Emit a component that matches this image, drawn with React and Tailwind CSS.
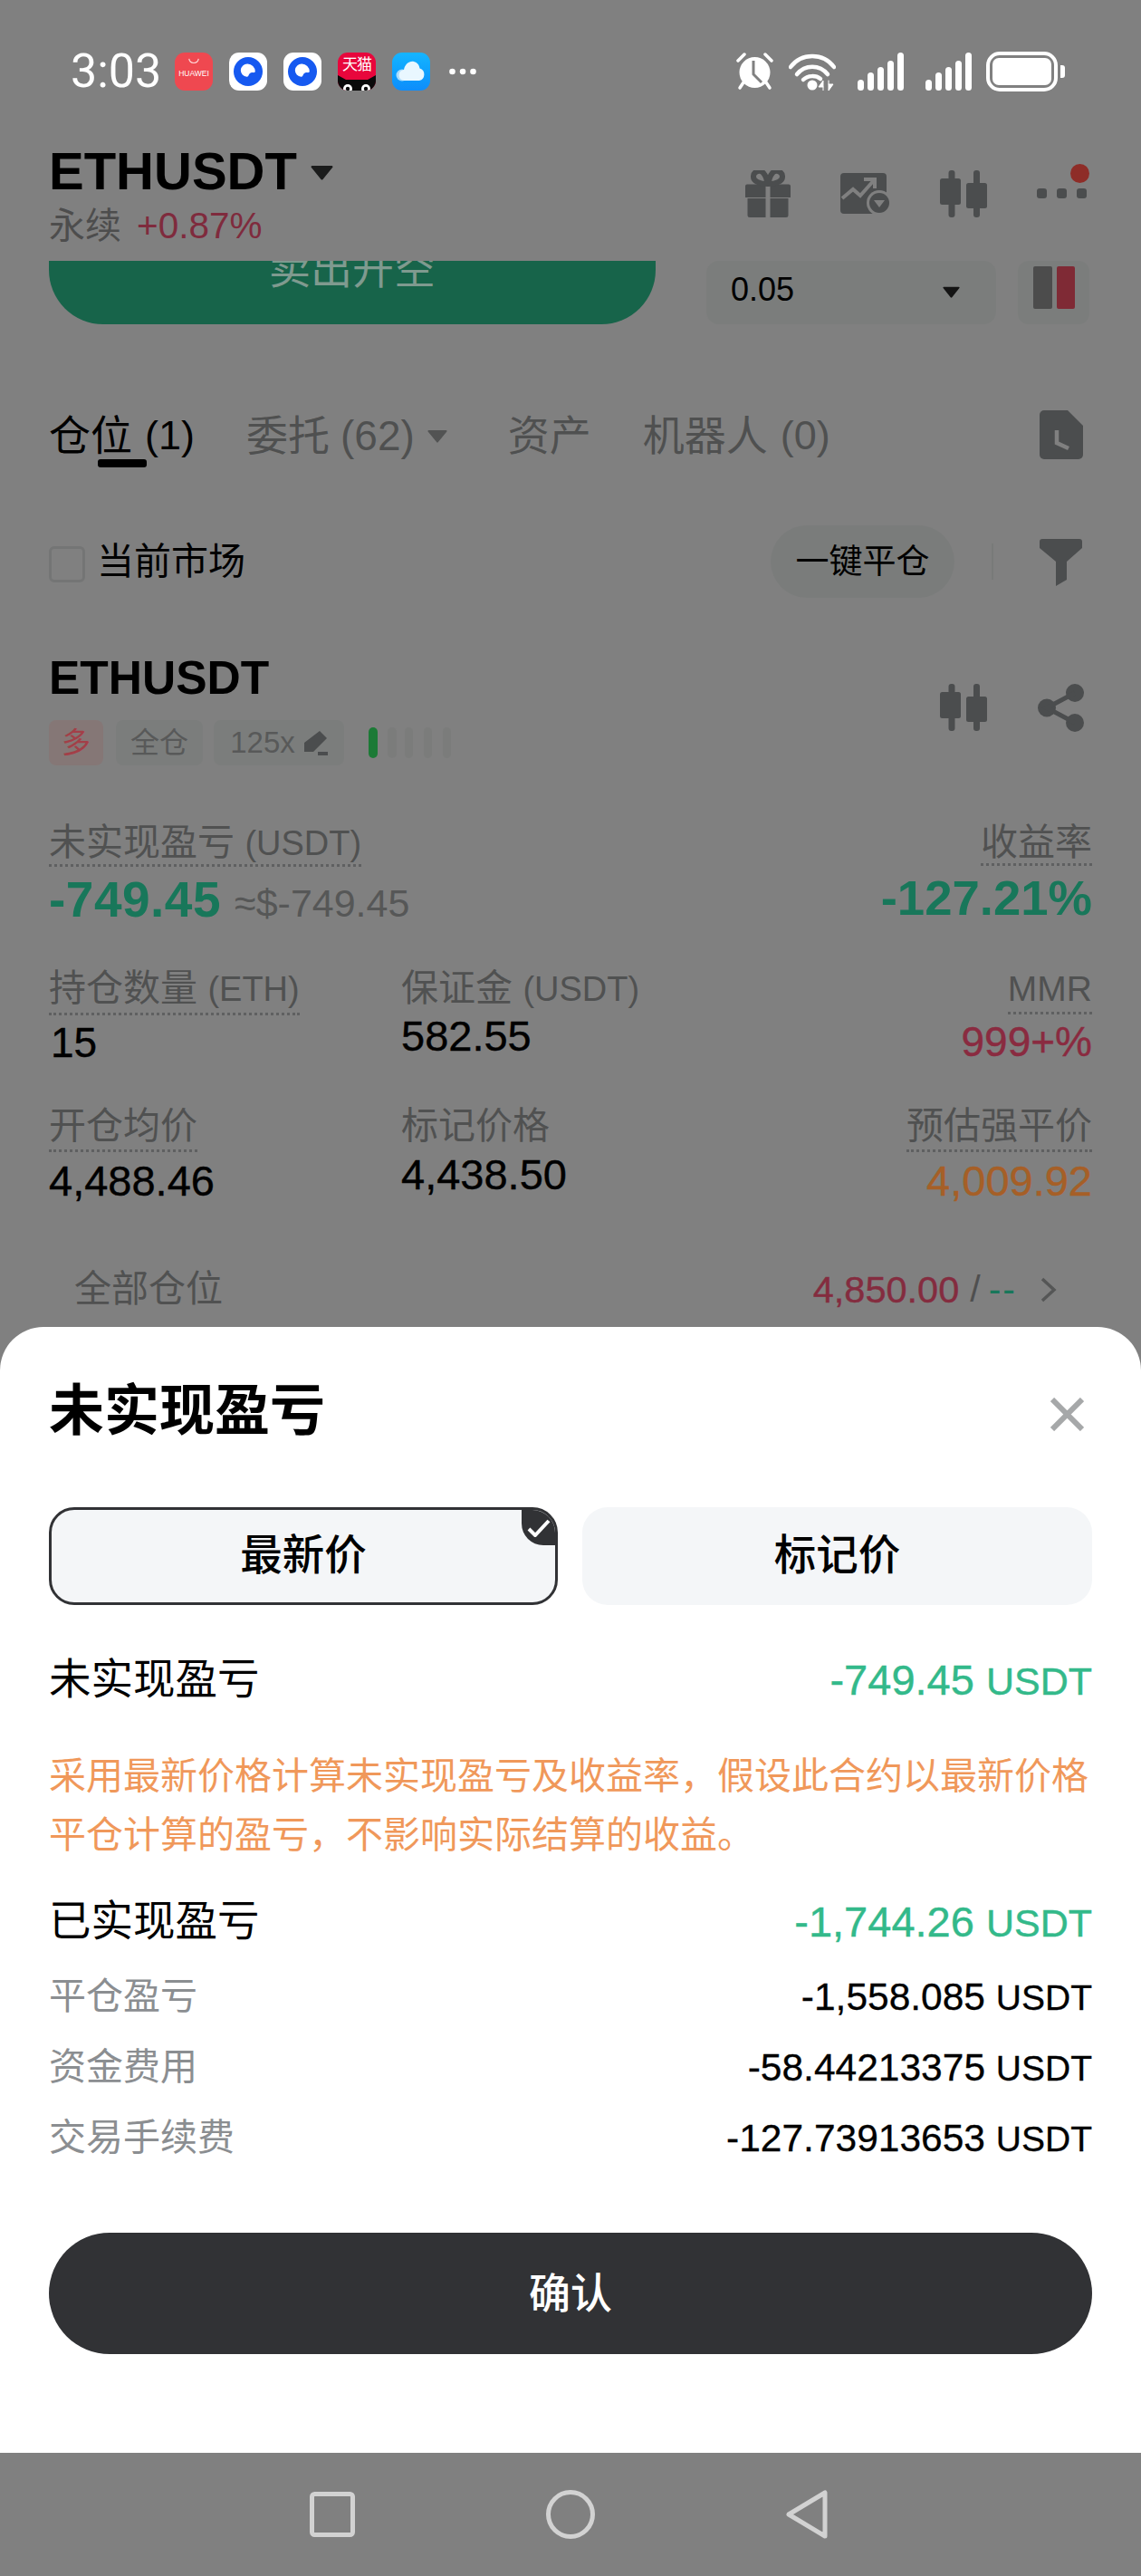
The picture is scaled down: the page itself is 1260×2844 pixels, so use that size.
import React from "react";

const Caret = ({ w, h, c, className = "" }) => (
  <svg width={w} height={h} viewBox="0 0 24 16" preserveAspectRatio="none" className={className}>
    <path d="M1.5 1h21a1 1 0 0 1 .8 1.6L13 15a1.3 1.3 0 0 1-2 0L.7 2.6A1 1 0 0 1 1.500 1z" fill={c} />
  </svg>
);

const Candles = () => (
  <svg width="52" height="52" viewBox="0 0 52 52" fill="#4b4d4e">
    <rect x="9.500" y="0" width="7" height="52" rx="3" />
    <rect x="0" y="9" width="23" height="29" rx="2.500" />
    <rect x="37" y="0" width="7" height="52" rx="3" />
    <rect x="29" y="14" width="23" height="28" rx="2.500" />
  </svg>
);

const Signal = () => (
  <svg width="51" height="42" viewBox="0 0 51 42" fill="#fff">
    <rect x="0" y="30" width="7" height="12" rx="3.500" />
    <rect x="11" y="22" width="7" height="20" rx="3.500" />
    <rect x="22" y="16" width="7" height="26" rx="3.500" />
    <rect x="33" y="9" width="7" height="33" rx="3.500" />
    <rect x="44" y="0" width="7" height="42" rx="3.500" />
  </svg>
);

const BlueApp = () => (
  <div className="w-[42px] h-[42px] rounded-[11px] bg-white flex items-center justify-center">
    <svg width="32" height="32" viewBox="0 0 32 32">
      <circle cx="16" cy="16" r="16" fill="#1659f0" />
      <path d="M15.500 7.500a8.500 8.500 0 0 1 8.300 8.300c0 1.400-1.700 1.500-2.700 1.300-2.200-.3-4 1-4.600 3.200-.3 1-.9 1.600-2 1.400a7.300 7.300 0 0 1-6.700-7.200 7.300 7.300 0 0 1 7.700-7z" fill="#fff" />
    </svg>
  </div>
);

const Label = ({ children, pb = "pb-[3px]" }) => (
  <div className={`pt-[3px] text-[41px] leading-[45px] text-[#505151] border-b-[3px] border-dotted border-[#5f6061] ${pb}`}>{children}</div>
);

const Latin = ({ children }) => <span className="text-[38px]">{children}</span>;

const Badge = ({ className = "", children }) => (
  <div className={`h-[50px] rounded-[8px] flex items-center justify-center text-[32px] ${className}`}>{children}</div>
);

const ModalRow = ({ label, value }) => (
  <div className="flex justify-between items-center h-[60px] mt-[18px]">
    <span className="text-[41px] text-[#8b8e91]">{label}</span>
    <span className="text-[42.500px] text-black [-webkit-text-stroke:0.3px]">{value} <span className="text-[39px]">USDT</span></span>
  </div>
);

export default function App() {
  return (
    <div className="w-[1260px] h-[2844px] bg-[#808080] flex flex-col overflow-hidden [font-family:'Liberation_Sans','Noto_Sans_CJK_SC',sans-serif]">
      <div className="h-[1465px] shrink-0 overflow-hidden">
        {/* status bar */}
        <div className="h-[140px] pt-[57px] flex items-start">
          <div className="h-[44px] flex items-center pl-[78px] w-full">
            <span className="w-[115px] text-[52px] leading-[44px] text-white [font-family:Roboto,sans-serif]">3:03</span>
            <div className="w-[42px] h-[42px] rounded-[11px] bg-[#ef4850] flex flex-col items-center pt-[6px]">
              <svg width="14" height="7" viewBox="0 0 16 8"><path d="M2 1c1 7 11 7 12 0" stroke="#ffd9da" strokeWidth="1.300" fill="none" /></svg>
              <span className="text-[8.500px] leading-[12px] text-white mt-[4px]">HUAWEI</span>
            </div>
            <div className="ml-[18px]"><BlueApp /></div>
            <div className="ml-[18px]"><BlueApp /></div>
            <div className="ml-[18px] w-[42px] h-[42px] rounded-[11px] bg-[#e8063c] overflow-hidden relative">
              <div className="text-[17px] leading-[22px] pt-[3px] text-white text-center tracking-[-1px]">天猫</div>
              <svg className="absolute left-0 bottom-0" width="42" height="17" viewBox="0 0 42 17">
                <path d="M0 0l9 5h24l9-5v17H0z" fill="#0a0a0a" />
                <circle cx="11" cy="15" r="5" fill="#fff" /><circle cx="31" cy="15" r="5" fill="#fff" />
                <circle cx="11" cy="15" r="2.200" fill="#0a0a0a" /><circle cx="31" cy="15" r="2.200" fill="#0a0a0a" />
              </svg>
            </div>
            <div className="ml-[18px] w-[42px] h-[42px] rounded-[11px] bg-gradient-to-b from-[#16b5ff] to-[#0f8dfb] flex items-center justify-center">
              <svg width="34" height="26" viewBox="0 0 34 26">
                <circle cx="7" cy="17" r="6.500" fill="#a9dcfd" />
                <path d="M10 23a6 6 0 0 1-1-12c1-6 6-10 11-9 4 1 6 4 6.500 7.500A7 7 0 0 1 26 23z" fill="#e9f7ff" />
              </svg>
            </div>
            <svg className="ml-[21px]" width="30" height="8" viewBox="0 0 30 8" fill="#fff">
              <circle cx="3.500" cy="4" r="3.300" /><circle cx="15" cy="4" r="3.300" /><circle cx="26.500" cy="4" r="3.300" />
            </svg>

            <div className="ml-auto pr-[84px] flex items-center">
              <svg width="43" height="42" viewBox="0 0 43 42">
                <path d="M3 9L10 2M33 2l7 7" stroke="#fff" strokeWidth="3.500" strokeLinecap="round" />
                <path d="M9 33l-4 6M34 33l4 6" stroke="#fff" strokeWidth="3.500" strokeLinecap="round" />
                <circle cx="21.500" cy="22" r="17" fill="#fff" />
                <path d="M20 9v15l9 9" stroke="#808080" strokeWidth="3" fill="none" />
              </svg>
              <svg className="ml-[16px]" width="52" height="42" viewBox="0 0 52 42" fill="none" stroke="#fff" strokeLinecap="round">
                <path d="M2 16C14 0 38 0 50 16" strokeWidth="4.500" />
                <path d="M9 24c9-11 25-11 34 0" strokeWidth="4.500" />
                <path d="M16 30c5-5 14-5 19-1" strokeWidth="4.500" />
                <circle cx="26" cy="36" r="5.500" fill="#fff" stroke="none" />
                <path d="M38 42V31l-5 7h5M44 31v11l5-7h-5" fill="#fff" strokeWidth="1" />
              </svg>
              <div className="ml-[24px]"><Signal /></div>
              <div className="ml-[24px]"><Signal /></div>
              <div className="ml-[16px] w-[79px] h-[44px] rounded-[15px] border-[4px] border-white p-[3px]">
                <div className="w-full h-full rounded-[7px] bg-white" />
              </div>
              <div className="ml-[3px] w-[5px] h-[14px] rounded-r-[3px] bg-white" />
            </div>
          </div>
        </div>

        {/* header */}
        <div className="h-[148px] pl-[54px] flex">
          <div>
            <div className="mt-[20px] h-[58px] flex items-center">
              <span className="text-[58px] leading-[58px] font-bold text-black">ETHUSDT</span>
              <Caret w={25} h={17} c="#1b1c1c" className="ml-[15px] mt-[2px]" />
            </div>
            <div className="mt-[6px] h-[50px] flex items-center">
              <span className="text-[40px] leading-[50px] text-[#4d4d4d]">永续</span>
              <span className="text-[40.500px] leading-[50px] text-[#7f2b3d] ml-[17px]">+0.87%</span>
            </div>
          </div>
          <div className="ml-auto pr-[60px] mt-[48px] flex items-start relative h-[52px]">
            <svg width="52" height="52" viewBox="0 0 52 52" fill="#4b4d4e">
              <path d="M1 17.500a2 2 0 0 1 2-2h20.500V30H1zM28.500 15.500H49a2 2 0 0 1 2 2V30H28.500zM3.500 31h20v21H6a2.500 2.500 0 0 1-2.500-2.500zM28.500 31h20v18.500a2.500 2.500 0 0 1-2.500 2.500H28.500z" />
              <path d="M25.500 15C17 15 9.500 12 10 6.500 10.500 1 17.500-1 21 3c2 2.300 3.800 6 4.500 12zM26.500 15C35 15 42.500 12 42 6.500 41.500 1 34.500-1 31 3c-2 2.300-3.800 6-4.500 12z" fill="none" stroke="#4b4d4e" strokeWidth="6" />
            </svg>
            <svg className="ml-[54px] mt-[3px]" width="56" height="46" viewBox="0 0 56 46">
              <rect x="0" y="0" width="51" height="45" rx="4" fill="#4b4d4e" />
              <path d="M2 28l12-10 8 7 16-18M26 7h12v10" fill="none" stroke="#808080" strokeWidth="4" />
              <circle cx="43" cy="33" r="14" fill="#808080" />
              <circle cx="43" cy="33" r="11" fill="#4b4d4e" />
              <path d="M37 30h12l-6 8z" fill="#808080" />
            </svg>
            <div className="ml-[54px]"><Candles /></div>
            <svg className="ml-[55px] mt-[20px]" width="55" height="11" viewBox="0 0 55 11" fill="#4b4d4e">
              <rect x="0" width="11" height="11" rx="3" /><rect x="22" width="11" height="11" rx="3" /><rect x="44" width="11" height="11" rx="3" />
            </svg>
            <div className="absolute right-[57px] top-[-7px] w-[21px] h-[21px] rounded-full bg-[#8e2d28]" />
          </div>
        </div>

        {/* action row */}
        <div className="h-[70px] pl-[54px] flex">
          <div className="w-[670px] h-[70px] bg-[#17644a] rounded-b-[60px] overflow-hidden">
            <div className="-mt-[16px] text-center text-[46px] leading-[50px] text-[#7f9a8f]">卖出开空</div>
          </div>
          <div className="ml-[56px] w-[320px] h-[70px] rounded-[14px] bg-[#7b7d7c] flex items-center pl-[27px] pr-[40px]">
            <span className="text-[36px] leading-[40px] text-black -mt-[6px]">0.05</span>
            <Caret w={19} h={13} c="#141414" className="ml-auto -mt-[2px]" />
          </div>
          <div className="ml-[24px] w-[79px] h-[70px] rounded-[12px] bg-[#7b7d7c] flex justify-center gap-[5px] pt-[6px]">
            <div className="w-[21px] h-[47px] bg-[#4c4c4c] rounded-[2px]" />
            <div className="w-[20px] h-[47px] bg-[#7f2a35] rounded-[2px]" />
          </div>
        </div>

        {/* tabs */}
        <div className="mt-[93px] h-[60px] pl-[54px] pr-[64px] flex items-center text-[46px] leading-[60px] text-[#4f5050]">
          <div className="relative text-black flex gap-[14px]">
            <span>仓位</span><span className="text-[45px]">(1)</span>
            <div className="absolute left-[54px] top-[56px] w-[54px] h-[9px] rounded-[3px] bg-black" />
          </div>
          <div className="ml-[57px] flex gap-[12px]"><span>委托</span><span>(62)</span></div>
          <Caret w={22} h={15} c="#525353" className="ml-[14px]" />
          <span className="ml-[67px]">资产</span>
          <div className="ml-[57px] flex gap-[14px]"><span>机器人</span><span className="text-[45px]">(0)</span></div>
          <svg className="ml-auto -mt-[2px]" width="48" height="54" viewBox="0 0 48 54">
            <path d="M5 0h26l17 17v32a5 5 0 0 1-5 5H5a5 5 0 0 1-5-5V5a5 5 0 0 1 5-5z" fill="#4b4d4e" />
            <path d="M19 22v14l13 6" fill="none" stroke="#808080" strokeWidth="4.500" />
          </svg>
        </div>

        {/* filter */}
        <div className="mt-[69px] h-[80px] pl-[54px] pr-[65px] flex items-center">
          <div className="w-[40px] h-[40px] rounded-[6px] border-[3px] border-[#747575] mt-[6px]" />
          <span className="ml-[13px] mt-[2px] text-[41px] text-black">当前市场</span>
          <div className="ml-auto w-[203px] h-[80px] pt-[2px] rounded-full bg-[#7a7c7b] flex items-center justify-center text-[37px] text-black">一键平仓</div>
          <div className="ml-[41px] w-[2px] h-[40px] bg-[#787a79]" />
          <svg className="ml-[51px] mt-[2px]" width="47" height="52" viewBox="0 0 47 52">
            <path d="M3 0h41a3 3 0 0 1 3 3v7L30 25v20l-12 7V25L0 10V3a3 3 0 0 1 3-3z" fill="#4b4d4e" />
          </svg>
        </div>

        {/* position header */}
        <div className="mt-[58px] pl-[54px] pr-[62px] flex">
          <div>
            <div className="h-[60px] text-[51.500px] leading-[60px] font-bold text-black">ETHUSDT</div>
            <div className="mt-[17px] flex items-center">
              <Badge className="w-[60px] bg-[#857776] text-[#a33f48]">多</Badge>
              <Badge className="ml-[14px] w-[96px] bg-[#7b7d7c] text-[#585959]">全仓</Badge>
              <Badge className="ml-[12px] w-[144px] bg-[#7b7d7c] text-[#585959] gap-[10px]">
                <span className="text-[33px]">125x</span>
                <svg width="26" height="28" viewBox="0 0 26 28" fill="#4b4d4e"><path d="M17 1l8 8-15 15H0V14zM15 24h11v4H15z" /></svg>
              </Badge>
              <div className="ml-[27px] w-[10px] h-[34px] rounded-[5px] bg-[#1c7a36]" />
              <div className="ml-[11px] w-[10px] h-[34px] rounded-[5px] bg-[#7b7c7b]" />
              <div className="ml-[9px] w-[9px] h-[34px] rounded-[5px] bg-[#7b7c7b]" />
              <div className="ml-[12px] w-[9px] h-[34px] rounded-[5px] bg-[#7b7c7b]" />
              <div className="ml-[12px] w-[9px] h-[34px] rounded-[5px] bg-[#7b7c7b]" />
            </div>
          </div>
          <div className="ml-auto mt-[37px] flex items-start">
            <Candles />
            <svg className="ml-[56px]" width="52" height="53" viewBox="0 0 52 53" fill="#4b4d4e">
              <circle cx="41" cy="10" r="10" /><circle cx="10" cy="26.500" r="10" /><circle cx="41" cy="43" r="10" />
              <path d="M41 10L10 26.500 41 43" fill="none" stroke="#4b4d4e" strokeWidth="5" />
            </svg>
          </div>
        </div>

        {/* details */}
        <div className="mt-[60px] pl-[54px] pr-[54px]">
          <div className="flex justify-between">
            <div>
              <div className="inline-block"><Label pb="pb-0">未实现盈亏 <Latin>(USDT)</Latin></Label></div>
              <div className="mt-[8px] h-[56px] flex items-baseline leading-[56px]">
                <span className="text-[55px] tracking-[0.5px] font-bold text-[#18775a]">-749.45</span>
                <span className="ml-[15px] text-[43px] text-[#565757]">≈$-749.45</span>
              </div>
            </div>
            <div className="flex flex-col items-end">
              <Label pb="pb-0">收益率</Label>
              <div className="mt-[8px] text-[54.500px] leading-[56px] font-bold text-[#18775a]">-127.21%</div>
            </div>
          </div>

          <div className="mt-[45px] flex">
            <div className="w-[389px]">
              <div className="inline-block"><Label>持仓数量 <Latin>(ETH)</Latin></Label></div>
              <div className="mt-[5px] text-[46px] leading-[50px] text-black pl-[2px] [-webkit-text-stroke:0.4px]">15</div>
            </div>
            <div>
              <div className="pt-[3px] text-[41px] leading-[45px] text-[#505151]">保证金 <Latin>(USDT)</Latin></div>
              <div className="mt-[4px] text-[47px] leading-[50px] text-black [-webkit-text-stroke:0.4px]">582.55</div>
            </div>
            <div className="ml-auto flex flex-col items-end">
              <Label><span className="text-[39px]">MMR</span></Label>
              <div className="mt-[5px] text-[46px] leading-[50px] text-[#8a2b40] [-webkit-text-stroke:0.4px]">999+%</div>
            </div>
          </div>

          <div className="mt-[42px] flex">
            <div className="w-[389px]">
              <div className="inline-block"><Label>开仓均价</Label></div>
              <div className="mt-[7px] text-[47px] leading-[50px] text-black [-webkit-text-stroke:0.4px]">4,488.46</div>
            </div>
            <div>
              <div className="pt-[3px] text-[41px] leading-[45px] text-[#505151]">标记价格</div>
              <div className="mt-[6px] text-[47px] leading-[50px] text-black [-webkit-text-stroke:0.4px]">4,438.50</div>
            </div>
            <div className="ml-auto flex flex-col items-end">
              <Label>预估强平价</Label>
              <div className="mt-[7px] text-[47px] leading-[50px] text-[#a65f27] [-webkit-text-stroke:0.4px]">4,009.92</div>
            </div>
          </div>

          <div className="mt-[70px] h-[50px] pl-[28px] pr-[39px] flex items-center">
            <span className="text-[41px] text-[#505151]">全部仓位</span>
            <span className="ml-auto text-[41.500px] text-[#842c3f] [-webkit-text-stroke:0.4px]">4,850.00</span>
            <span className="ml-[12px] text-[41px] text-[#4f4f4f]">/</span>
            <span className="ml-[9px] text-[41px] tracking-[2px] text-[#18775a]">--</span>
            <svg className="ml-[26px]" width="18" height="28" viewBox="0 0 18 28"><path d="M2 2l13 12L2 26" fill="none" stroke="#555656" strokeWidth="3.500" /></svg>
          </div>
        </div>
      </div>

      {/* modal */}
      <div className="h-[1243px] shrink-0 bg-white rounded-t-[48px] px-[54px] pt-[58px]">
        <div className="flex justify-between items-center h-[70px] pr-[9px]">
          <span className="text-[61px] leading-[70px] font-bold text-black">未实现盈亏</span>
          <svg width="37" height="37" viewBox="0 0 37 37" className="mt-[6px]"><path d="M2 2l33 33M35 2L2 35" stroke="#a6a8a9" strokeWidth="6" /></svg>
        </div>
        <div className="mt-[71px] flex justify-between">
          <div className="relative w-[562px] shrink-0 h-[108px] rounded-[28px] border-[3px] border-[#313235] bg-[#f4f6f8] overflow-hidden flex items-center justify-center text-[46.500px] font-medium text-black">
            最新价
            <div className="absolute right-0 top-0 w-[37px] h-[39px] bg-[#313235] rounded-bl-[24px] flex items-center justify-center">
              <svg width="26" height="20" viewBox="0 0 26 20"><path d="M2 11l7 7L24 2" fill="none" stroke="#fff" strokeWidth="4" /></svg>
            </div>
          </div>
          <div className="w-[563px] shrink-0 h-[108px] rounded-[28px] bg-[#f4f6f8] flex items-center justify-center text-[46.500px] font-medium text-black">标记价</div>
        </div>
        <div className="mt-[53px] h-[60px] flex justify-between items-center">
          <span className="text-[46.500px] text-black">未实现盈亏</span>
          <span className="text-[47px] text-[#33b98a] [-webkit-text-stroke:0.4px]">-749.45 <span className="text-[43px]">USDT</span></span>
        </div>
        <div className="mt-[44px] text-[41px] leading-[65px] text-[#f0985a]">采用最新价格计算未实现盈亏及收益率，假设此合约以最新价格平仓计算的盈亏，不影响实际结算的收益。</div>
        <div className="mt-[33px] h-[60px] flex justify-between items-center">
          <span className="text-[46.500px] text-black">已实现盈亏</span>
          <span className="text-[47px] text-[#33b98a] [-webkit-text-stroke:0.4px]">-1,744.26 <span className="text-[43px]">USDT</span></span>
        </div>
        <div className="h-[5px]" />
        <ModalRow label="平仓盈亏" value="-1,558.085" />
        <ModalRow label="资金费用" value="-58.44213375" />
        <ModalRow label="交易手续费" value="-127.73913653" />
        <div className="mt-[74px] h-[134px] rounded-full bg-[#313235] flex items-center justify-center text-[46px] font-medium text-white">确认</div>
      </div>

      {/* nav */}
      <div className="h-[136px] pl-[342px] flex items-center">
        <svg width="50" height="50" viewBox="0 0 50 50"><rect x="2.500" y="2.500" width="45" height="45" rx="3" fill="none" stroke="#d2d2d2" strokeWidth="5" /></svg>
        <svg className="ml-[211px]" width="54" height="54" viewBox="0 0 54 54"><circle cx="27" cy="27" r="24.500" fill="none" stroke="#d2d2d2" strokeWidth="5" /></svg>
        <svg className="ml-[211px]" width="46" height="54" viewBox="0 0 46 54"><path d="M43 3v48L3 27z" fill="none" stroke="#d2d2d2" strokeWidth="5" strokeLinejoin="round" /></svg>
      </div>
    </div>
  );
}
